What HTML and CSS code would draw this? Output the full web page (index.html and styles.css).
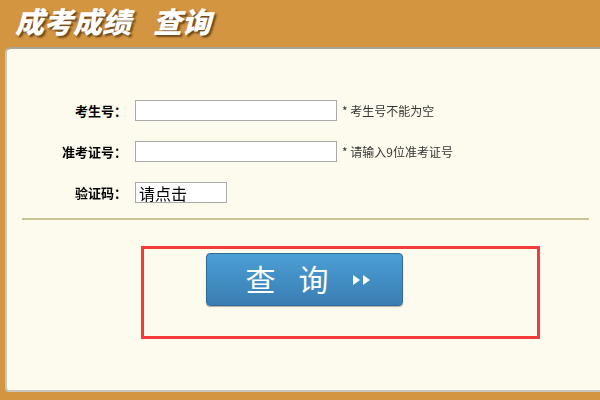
FILE: index.html
```html
<!DOCTYPE html>
<html lang="zh-CN">
<head>
    <meta charset="UTF-8">
    <title>成考成绩 查询</title>
    <link rel="stylesheet" href="styles.css">
</head>
<body>
    <div class="header">
        <h1>成考成绩<span class="title-sub">查询</span></h1>
    </div>
    <div class="panel">
        <form class="query-form">
            <div class="form-row">
                <label for="ksh">考生号：</label>
                <input type="text" id="ksh" class="text-input" autofocus>
                <span class="hint">* 考生号不能为空</span>
            </div>
            <div class="form-row">
                <label for="zkzh">准考证号：</label>
                <input type="text" id="zkzh" class="text-input">
                <span class="hint">* 请输入9位准考证号</span>
            </div>
            <div class="form-row">
                <label for="yzm">验证码：</label>
                <input type="text" id="yzm" class="code-input" value="请点击">
            </div>
        </form>
        <hr class="divider">
        <div class="submit-box">
            <button type="button" class="query-btn">
                <span>查</span><span>询</span>
                <svg class="arrows" width="20" height="12" viewBox="0 0 20 12">
                    <polygon points="1,1 8,6 1,11" fill="#fff"/>
                    <polygon points="11,1 18,6 11,11" fill="#fff"/>
                </svg>
            </button>
        </div>
    </div>
</body>
</html>
```

FILE: styles.css
```css
body {
    margin: 0;
    background: #d49541;
    font-family: "Liberation Sans", "Noto Sans CJK SC", sans-serif;
    height: 400px;
    overflow: hidden;
}
.header {
    height: 47px;
    padding-left: 15px;
}
.header h1 {
    margin: 0;
    font-size: 29px;
    line-height: 40px;
    font-style: italic;
    font-weight: 900;
    color: #fff;
    font-family: "Noto Sans CJK SC", sans-serif;
    text-shadow: 2px 2px 2px rgba(60, 40, 10, 0.7);
}
.title-sub {
    margin-left: 22px;
}
.panel {
    margin-left: 5px;
    height: 345px;
    background: #fdfaee;
    border-top: 2px solid #a8a49a;
    border-left: 2px solid #c9c6bd;
    border-bottom: 2px solid #c9c6bd;
    border-top-left-radius: 6px;
    border-bottom-left-radius: 4px;
    box-sizing: border-box;
    padding-top: 51px;
}
.query-form {
    display: flex;
    flex-direction: column;
    gap: 20px;
}
.form-row {
    display: flex;
    align-items: center;
    height: 21px;
}
.form-row label {
    width: 120px;
    text-align: right;
    font-size: 13px;
    font-weight: bold;
    color: #000;
    font-family: "Noto Sans CJK SC", sans-serif;
}
.text-input,
.code-input {
    margin: 0 0 0 8px;
    height: 21px;
    box-sizing: border-box;
    border: 1px solid #aaa;
    background: #fff;
    padding: 0 2px;
    outline: none;
}
.text-input {
    width: 202px;
}
.code-input {
    width: 92px;
    font-size: 16px;
    line-height: 19px;
    color: #000;
    padding: 0 3px;
    font-family: "Noto Sans CJK SC", sans-serif;
}
.hint {
    margin-left: 5px;
    font-size: 12px;
    color: #333;
    font-family: "Noto Sans CJK SC", sans-serif;
}
.divider {
    margin: 15px 11px 0 15px;
    border: none;
    border-top: 2px solid #c9c395;
}
.submit-box {
    margin: 26px 0 0 134px;
    width: 399px;
    height: 93px;
    box-sizing: border-box;
    border: 3px solid #f33b3b;
    padding: 4px 0 0 62px;
}
.query-btn {
    width: 197px;
    height: 53px;
    display: flex;
    align-items: center;
    justify-content: center;
    gap: 23px;
    padding: 0 0 4px 8px;
    border: 1px solid #2f6b9b;
    border-radius: 4px;
    background: linear-gradient(#4b9fd5, #3a7db3);
    box-shadow: 0 1px 1px rgba(0, 0, 0, 0.3);
    color: #fff;
    font-size: 30px;
    font-family: "Noto Sans CJK SC", sans-serif;
    cursor: pointer;
}
.arrows {
    margin-top: 4px;
}
```
